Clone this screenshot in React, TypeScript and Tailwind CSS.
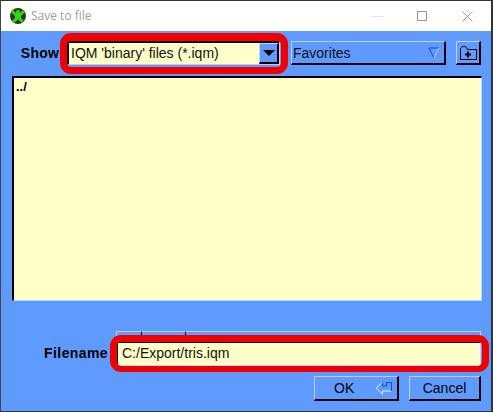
import React from 'react';

const bevel = 'border-t border-l border-t-[#b9d4ff] border-l-[#b9d4ff] border-b-2 border-r-2 border-b-black border-r-black';
const sunken = 'border-t-2 border-l-2 border-t-black border-l-black border-b border-r border-b-[#b9d4ff] border-r-[#b9d4ff]';

const AppIcon = () => (
  <svg width="16" height="16" viewBox="0 0 16 16">
    <circle cx="8" cy="8" r="8" fill="#3a3026" />
    <path d="M3 2 L6 5 H10 L13 2 L15 4 L11 8 V10 L14 13 L12 15 L8 11.5 L4 15 L2 13 L5 10 V8 L1 4 Z" fill="#22e010" />
    <circle cx="8" cy="4" r="2" fill="#22e010" />
  </svg>
);

const App = () => (
  <div className="relative w-[493px] h-[412px] flex flex-col border-t border-l border-r-2 border-b border-t-[#333] border-l-[#444] border-r-[#333] border-b-[#333] font-['Liberation_Sans',Arial,sans-serif] text-[14px] text-black overflow-hidden">
    {/* title bar */}
    <div className="h-[30px] shrink-0 bg-white flex items-center pl-[9px]">
      <AppIcon />
      <span className="ml-[5px] text-[#a0a0a0] font-['Open_Sans',sans-serif] text-[12px]">Save to file</span>
      <div className="ml-auto flex items-center">
        <span className="w-[11px] h-px bg-[#e2e2e2] mr-[34px]" />
        <span className="w-[10px] h-[10px] border border-[#999] mr-[35px]" />
        <svg width="11" height="11" viewBox="0 0 11 11" className="mr-[18px]" stroke="#999" fill="none">
          <path d="M0.5 0.5 L10.5 10.5 M10.5 0.5 L0.5 10.5" />
        </svg>
      </div>
    </div>

    {/* dialog body */}
    <div className="flex-1 bg-[#5f9bff] pl-[11px] pr-[10px] pt-[10px] flex flex-col">
      <div className="flex items-center h-[24px]">
        <span className="w-[55px] text-right pr-[8px] font-bold text-[14px] tracking-[0.2px]">Show</span>
        <div className={`w-[213px] h-[24px] flex bg-[#ffffc8] ${sunken}`}>
          <span className="flex-1 pl-[2px] leading-[21px] text-[#111]">IQM 'binary' files (*.iqm)</span>
          <span className={`w-[20px] bg-[#5f9bff] flex items-center justify-center ${bevel}`}>
            <svg width="12" height="6" viewBox="0 0 12 6"><path d="M0 0 H12 L6 6 Z" fill="#000" /></svg>
          </span>
        </div>
        <div className={`w-[155px] h-[24px] ml-[11px] flex items-center justify-between pl-[1px] pr-[4px] pt-[1px] ${bevel}`}>
          <span className="text-[#111]">Favorites</span>
          <svg width="12" height="12" viewBox="0 0 12 12" fill="none">
            <path d="M1 1 H11 L6 11 Z" stroke="#1a3cff" />
            <path d="M11 1 L6 11" stroke="#d8e8ff" />
          </svg>
        </div>
        <div className={`w-[25px] h-[24px] ml-[10px] flex items-center justify-center ${bevel}`}>
          <svg width="17" height="14" viewBox="0 0 17 14" fill="none" stroke="#000">
            <path d="M0.5 13.5 V2.5 L2.5 0.5 H5.5 L7.5 3.5 H16.5 V13.5 Z" />
            <path d="M5 8.5 H11 M8 5.5 V11.5" strokeWidth="2" />
          </svg>
        </div>
      </div>

      {/* file list */}
      <div className={`mt-[11px] h-[225px] w-[470px] bg-[#ffffc8] pl-[2px] pt-[2px] leading-[14px] font-bold text-[13px] ${sunken}`}>
        ../
      </div>

      {/* column header stubs peeking above the filename field */}
      <div className="mt-[30px] ml-[104px] w-[365px] h-[10px] flex">
        <span className="w-[26px] border-t border-l border-[#b9d4ff] border-r border-r-black" />
        <span className="w-[44px] border-t border-t-[#b9d4ff] border-r border-r-black" />
        <span className="flex-1 border-t border-t-[#b9d4ff] border-r border-r-[#b9d4ff]" />
      </div>

      <div className="flex items-center h-[25px]">
        <span className="w-[96px] text-right font-bold text-[14px] tracking-[0.4px]">Filename</span>
        <div className={`ml-[8px] w-[365px] h-[25px] bg-[#ffffc8] pl-[4px] leading-[21px] text-[#111] ${sunken}`}>
          C:/Export/tris.iqm
        </div>
      </div>

      <div className="mt-[10px] flex justify-end gap-[10px]">
        <div className={`w-[85px] h-[25px] flex items-center pl-[19px] ${bevel}`}>
          <span>OK</span>
          <svg width="18" height="14" viewBox="0 0 18 14" fill="none" className="ml-[21px]">
            <path d="M7.5 1.5 L1 7 L7.5 13 V10 H16.5 V9" stroke="#e4efff" />
            <path d="M7.5 1.5 V5 H11.5 V1.5 H16.5 V10" stroke="#1a3cff" />
          </svg>
        </div>
        <div className={`w-[72px] h-[25px] flex items-center justify-center ${bevel}`}>Cancel</div>
      </div>
    </div>

    {/* red annotation outlines drawn over the dialog */}
    <div className="absolute left-[59px] top-[32px] w-[228px] h-[41px] border-[7px] border-t-[8px] border-[#f00000] rounded-[11px]" />
    <div className="absolute left-[109px] top-[334px] w-[379px] h-[37px] border-[7px] border-b-[6px] border-[#f00000] rounded-[11px]" />
  </div>
);

export default App;
